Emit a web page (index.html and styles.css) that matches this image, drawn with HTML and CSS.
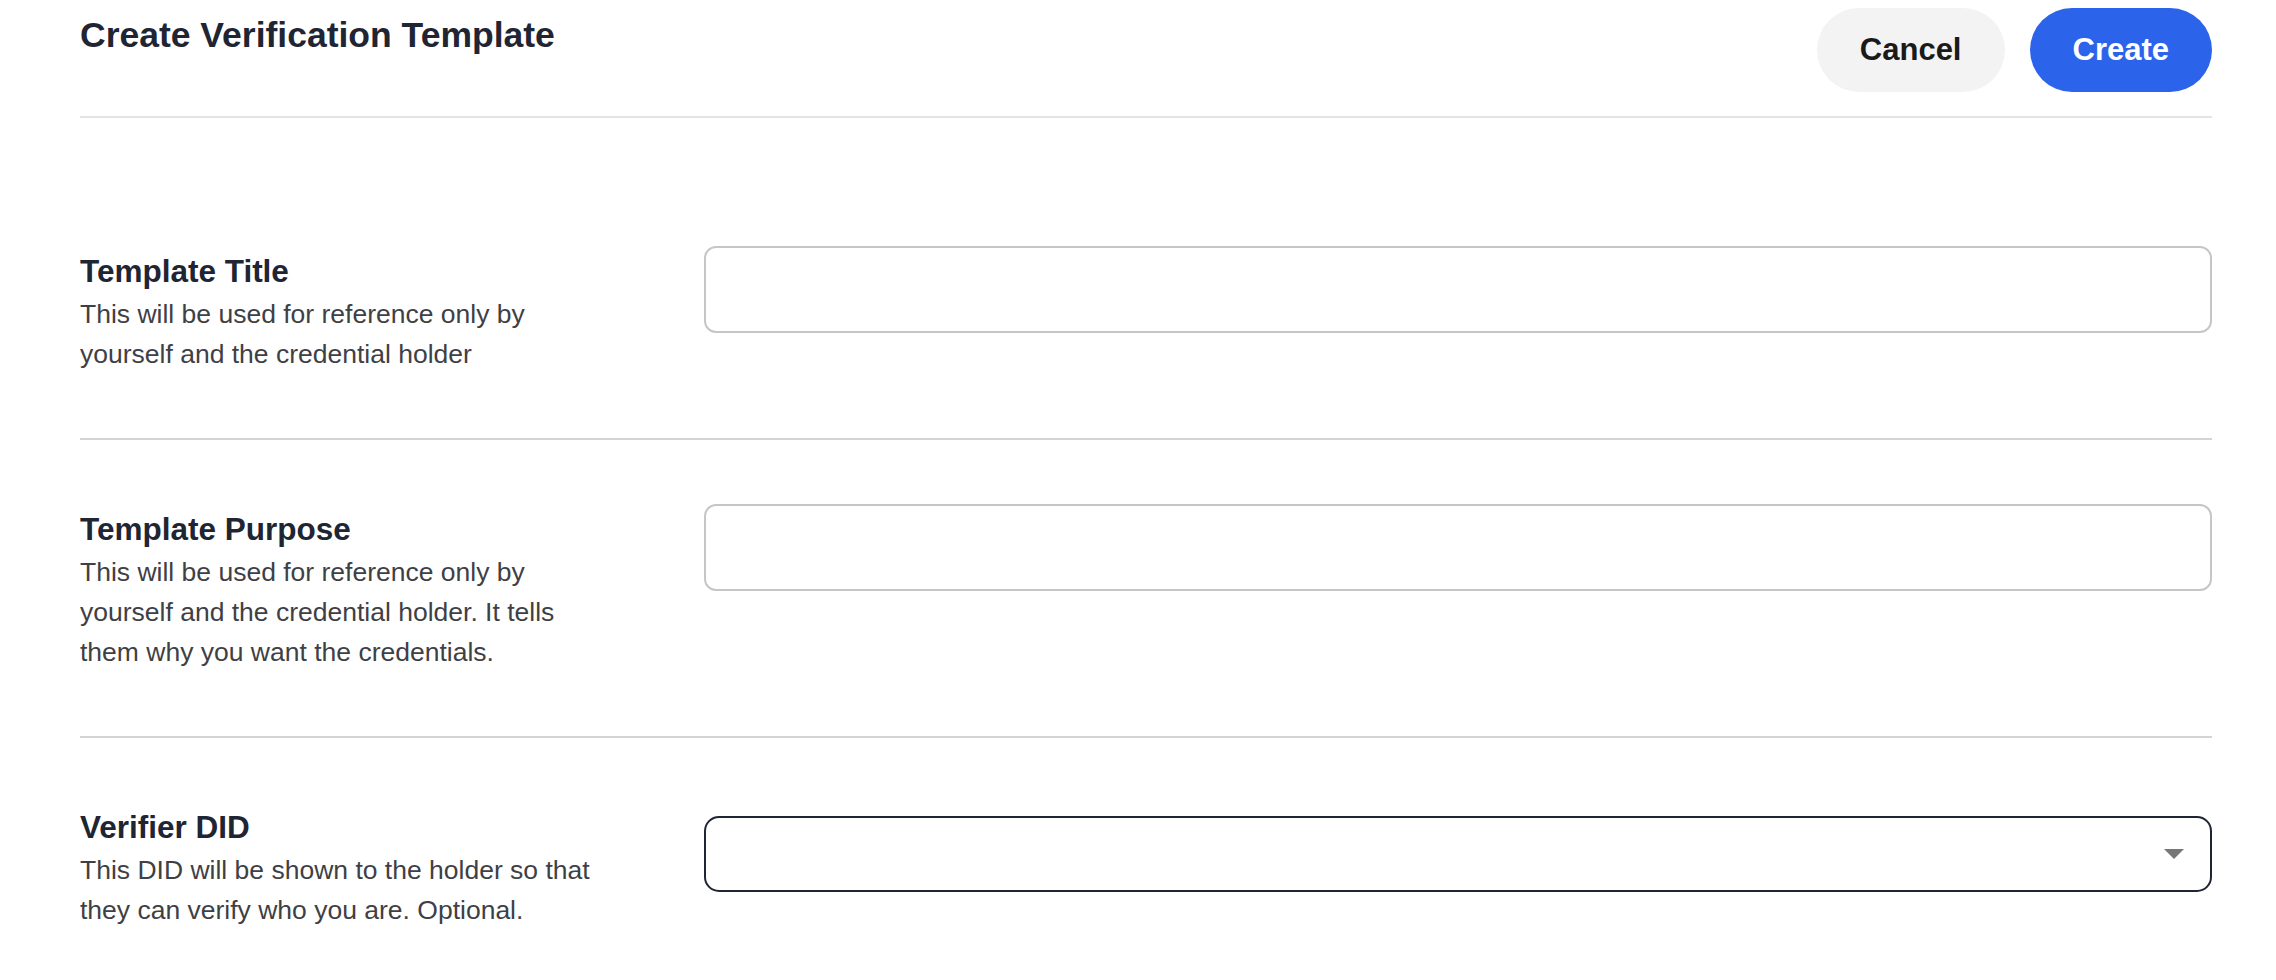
FILE: index.html
```html
<!DOCTYPE html>
<html>
<head>
  <title>Create Verification Template</title>
  <link rel="stylesheet" href="styles.css">
</head>
<body>

  <div class="page">
    <div class="header">
      <h1 class="title">Create Verification Template</h1>
      <div class="actions">
        <button class="btn btn-cancel">Cancel</button>
        <button class="btn btn-create">Create</button>
      </div>
    </div>

    <form class="form">
      <div class="row first">
        <div class="info">
          <div class="label">Template Title</div>
          <div class="desc">This will be used for reference only by yourself and the credential holder</div>
        </div>
        <input class="field" type="text">
      </div>

      <div class="row">
        <div class="info">
          <div class="label">Template Purpose</div>
          <div class="desc">This will be used for reference only by yourself and the credential holder. It tells them why you want the credentials.</div>
        </div>
        <input class="field" type="text">
      </div>

      <div class="row last">
        <div class="info">
          <div class="label">Verifier DID</div>
          <div class="desc">This DID will be shown to the holder so that they can verify who you are. Optional.</div>
        </div>
        <div class="select">
          <span class="arrow"></span>
        </div>
      </div>
    </form>
  </div>

</body>
</html>
```

FILE: styles.css
```css
body {
  margin: 0;
  background: #fff;
  font-family: "Liberation Sans", Arial, sans-serif;
  color: #1f2533;
}
.page {
  padding: 8px 64px 0 80px;
}
.header {
  display: flex;
  justify-content: space-between;
  align-items: flex-start;
  padding-bottom: 24px;
  border-bottom: 2px solid #e4e4e7;
}
.title {
  margin: 6px 0 0 0;
  font-size: 35.5px;
  font-weight: 700;
  line-height: 1.2;
}
.actions {
  display: flex;
  gap: 25px;
}
.btn {
  height: 84px;
  padding: 0 43px;
  border: none;
  border-radius: 42px;
  font-family: "Liberation Sans", Arial, sans-serif;
  font-size: 31px;
  font-weight: 700;
}
.btn-cancel {
  background: #f3f3f3;
  color: #1a1a1a;
}
.btn-create {
  background: #2c63eb;
  color: #fff;
}
.row {
  display: grid;
  grid-template-columns: 624px 1fr;
  align-items: start;
  padding: 64px 0;
  border-bottom: 2px solid #d4d4d8;
}
.row.first {
  margin-top: 64px;
}
.row.last {
  border-bottom: none;
  padding-bottom: 0;
}
.label {
  font-size: 31.5px;
  font-weight: 700;
  line-height: 40px;
  margin: 5px 0 3px;
}
.desc {
  max-width: 525px;
  font-size: 26.5px;
  line-height: 40px;
  color: #3f3f46;
}
.field {
  box-sizing: border-box;
  width: 100%;
  height: 87px;
  margin: 0;
  border: 2px solid #c6c6c6;
  border-radius: 12px;
  font-size: 27px;
  padding: 0 20px;
}
.select {
  box-sizing: border-box;
  height: 76px;
  margin-top: 14px;
  border: 2px solid #1f2533;
  border-radius: 15px;
  display: flex;
  align-items: center;
  justify-content: flex-end;
  padding-right: 26px;
}
.arrow {
  width: 0;
  height: 0;
  border-left: 10px solid transparent;
  border-right: 10px solid transparent;
  border-top: 10px solid #777;
}
```
